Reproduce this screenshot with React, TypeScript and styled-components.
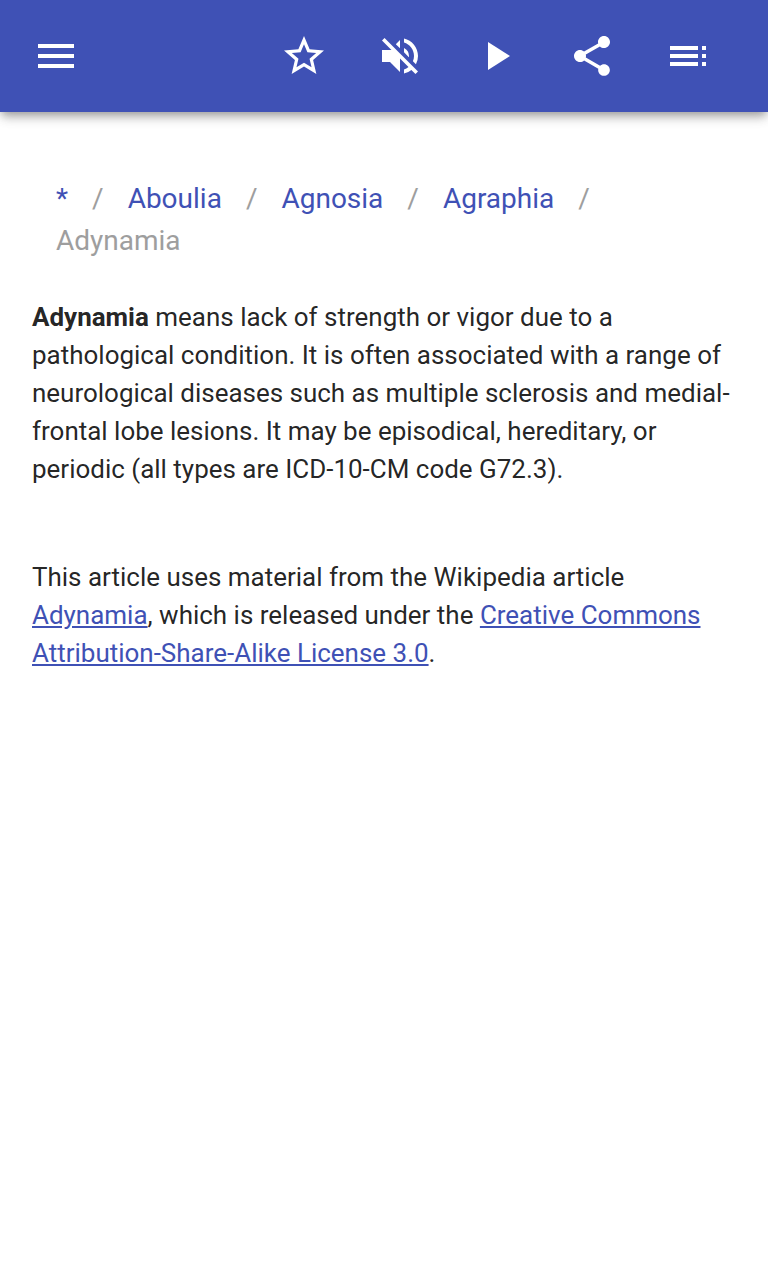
import React from 'react';
import styled, { createGlobalStyle } from 'styled-components';
import {
  MdMenu,
  MdStarBorder,
  MdVolumeOff,
  MdPlayArrow,
  MdShare,
  MdToc,
} from 'react-icons/md';

const GlobalStyle = createGlobalStyle`
  body {
    margin: 0;
    background: #fff;
    color: rgba(0, 0, 0, 0.87);
    font-family: Roboto, sans-serif;
  }
`;

const Toolbar = styled.header`
  display: flex;
  align-items: center;
  justify-content: space-between;
  box-sizing: border-box;
  height: 112px;
  padding: 0 56px 0 32px;
  background: #3f51b5;
  color: #fff;
  box-shadow:
    0 4px 8px -2px rgba(0, 0, 0, 0.24),
    0 8px 10px -2px rgba(0, 0, 0, 0.14),
    0 2px 16px 0 rgba(0, 0, 0, 0.12);
`;

const Actions = styled.div`
  display: flex;
  gap: 48px;
`;

const IconButton = styled.button`
  display: flex;
  padding: 0;
  border: 0;
  background: none;
  color: inherit;

  svg {
    width: 48px;
    height: 48px;
  }
`;

const Content = styled.main`
  padding: 66px 32px 0;
`;

const Breadcrumbs = styled.nav`
  display: flex;
  flex-wrap: wrap;
  padding: 0 100px 0 24px;
  font-size: 28px;
  line-height: 42px;
  color: #9e9e9e;
`;

const Crumb = styled.a`
  color: #3f51b5;
  text-decoration: none;
`;

const Separator = styled.span`
  margin: 0 24px;
`;

const Paragraph = styled.p<{ $top: number }>`
  margin: ${({ $top }) => $top}px 0 0;
  font-size: 25.97px;
  line-height: 38px;
`;

const Link = styled.a`
  color: #3f51b5;
  text-decoration: underline;
`;

const crumbs = ['*', 'Aboulia', 'Agnosia', 'Agraphia'];

const actions = [
  { label: 'Favorite', Icon: MdStarBorder },
  { label: 'Sound off', Icon: MdVolumeOff },
  { label: 'Play', Icon: MdPlayArrow },
  { label: 'Share', Icon: MdShare },
  { label: 'Contents', Icon: MdToc },
];

export default function App() {
  return (
    <>
      <GlobalStyle />
      <Toolbar>
        <IconButton aria-label="Menu">
          <MdMenu />
        </IconButton>
        <Actions>
          {actions.map(({ label, Icon }) => (
            <IconButton key={label} aria-label={label}>
              <Icon />
            </IconButton>
          ))}
        </Actions>
      </Toolbar>
      <Content>
        <Breadcrumbs>
          {crumbs.map((name) => (
            <React.Fragment key={name}>
              <Crumb href="#">{name}</Crumb>
              <Separator>/</Separator>
            </React.Fragment>
          ))}
          <span>Adynamia</span>
        </Breadcrumbs>
        <Paragraph $top={36}>
          <b>Adynamia</b> means lack of strength or vigor due to a pathological
          condition. It is often associated with a range of neurological
          diseases such as multiple sclerosis and medial-frontal lobe lesions.
          It may be episodical, hereditary, or periodic (all types are
          ICD-10-CM code G72.3).
        </Paragraph>
        <Paragraph $top={70}>
          This article uses material from the Wikipedia article{' '}
          <Link href="#">Adynamia</Link>, which is released under the{' '}
          <Link href="#">
            Creative Commons Attribution-Share-Alike License 3.0
          </Link>
          .
        </Paragraph>
      </Content>
    </>
  );
}
